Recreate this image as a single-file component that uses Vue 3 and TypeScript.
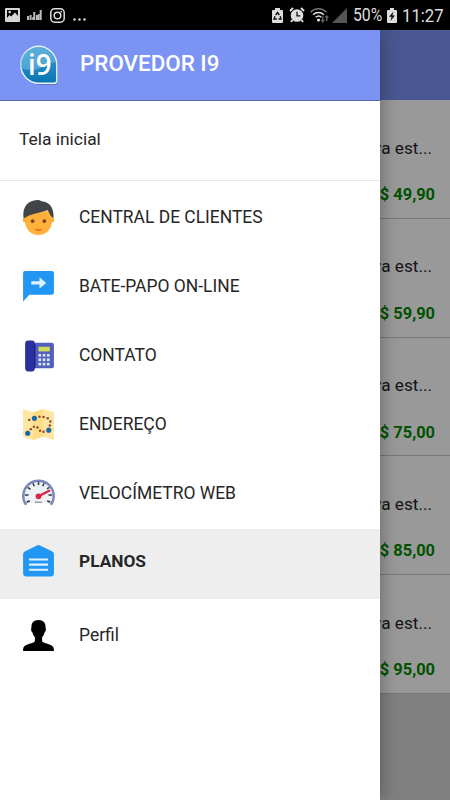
<script setup lang="ts">
interface MenuItem {
  id: string
  label: string
  active?: boolean
}

const menu: MenuItem[] = [
  { id: 'client', label: 'CENTRAL DE CLIENTES' },
  { id: 'chat', label: 'BATE-PAPO ON-LINE' },
  { id: 'phone', label: 'CONTATO' },
  { id: 'map', label: 'ENDEREÇO' },
  { id: 'speed', label: 'VELOCÍMETRO WEB' },
  { id: 'plans', label: 'PLANOS', active: true },
  { id: 'profile', label: 'Perfil' },
]

const prices: string[] = ['49,90', '59,90', '75,00', '85,00', '95,00']
const keys: number[] = [0, 1, 2, 3, 4, 5, 6, 7, 8]
</script>

<template>
  <div class="screen">
    <header class="status">
      <div class="status-left">
        <svg class="s-img" width="15" height="14" viewBox="0 0 15 14"><rect width="15" height="14" rx="1" fill="#d6d6d6" /><path fill="#000" d="M2 10V2h11v6l-3-3.500-3.800 4L4.500 7Z" /><circle cx="4.700" cy="4" r="1.300" fill="#d6d6d6" /></svg>
        <svg class="s-bars" width="15" height="10" viewBox="0 0 15 10"><path fill="#bdbdbd" d="M0 6h2v4H0zM2.600 5h2v5h-2zM5.200 7h2v3h-2zM6.300 2h2v8h-2zM9 5h2v5H9zM11 4h1.500v6H11zM12.700 0h2v10h-2z" /></svg>
        <svg class="s-insta" width="15" height="15" viewBox="0 0 15 15" fill="none" stroke="#dedede"><rect x=".8" y=".8" width="13.400" height="13.400" rx="3.800" stroke-width="1.500" /><circle cx="7.500" cy="7.500" r="3.300" stroke-width="1.500" /><circle cx="11.300" cy="3.700" r=".6" fill="#dedede" stroke-width=".5" /></svg>
        <svg class="s-dots" width="14" height="3" viewBox="0 0 14 3" fill="#ddd"><circle cx="1.500" cy="1.500" r="1.200" /><circle cx="6.500" cy="1.500" r="1.200" /><circle cx="11.500" cy="1.500" r="1.200" /></svg>
      </div>
      <div class="status-right">
        <svg width="11" height="15" viewBox="0 0 11 15"><path fill="#dedede" d="M3 0h5v2h2a1 1 0 0 1 1 1v11a1 1 0 0 1-1 1H1a1 1 0 0 1-1-1V3a1 1 0 0 1 1-1h2Z" /><path fill="none" stroke="#111" stroke-width="1.400" d="m3.700 7 1.800-2.500L7.300 7M8.200 8.200l.8 2.800H6.500M4.800 11H2l1-2.700" /></svg>
        <svg class="s-alarm" width="16" height="16" viewBox="0 0 16 16"><circle cx="8" cy="8.500" r="6.300" fill="#dedede" /><path fill="none" stroke="#dedede" stroke-width="2" d="m1 4 3-3M15 4l-3-3M3.500 13 2 15M12.500 13l1.500 2" /><path fill="none" stroke="#111" stroke-width="1.300" d="M8 4.700v4.200h3.300" /></svg>
        <svg class="s-wifi" width="20" height="15" viewBox="0 0 20 15"><g fill="none" stroke-width="1.500"><path stroke="#777" d="M.7 4.200c4.200-4.500 11.400-4.500 15.600 0" /><path stroke="#dedede" d="M3.100 6.800c3-3 7.800-3 10.800 0M5.600 9.300c1.700-1.600 4.100-1.600 5.800 0" /></g><circle cx="8.500" cy="12" r="1.600" fill="#dedede" /><path fill="#666" d="M12 8.500h1.500V12h1.500l-2.300 3-2.200-3H12ZM16 13v-3.500h-1.400l2.200-2.500L19 9.500h-1.500V13Z" /></svg>
        <svg class="s-signal" width="15" height="15" viewBox="0 0 15 15"><path fill="#555" d="M15 0v15H0Z" /></svg>
        <span class="percent">50%</span>
        <svg class="s-battery" width="10" height="15" viewBox="0 0 10 15"><path fill="#dedede" d="M3 0h4v2h2a1 1 0 0 1 1 1v11a1 1 0 0 1-1 1H1a1 1 0 0 1-1-1V3a1 1 0 0 1 1-1h2Z" /><path fill="#111" d="M6.500 3.500 2 8.700h2.500L3.500 13 8 7.500H5.500Z" /></svg>
        <span class="clock">11:27</span>
      </div>
    </header>

    <main class="app">
      <section class="page">
        <div class="toolbar"></div>
        <article v-for="price in prices" :key="price" class="plan">
          <p class="plan-name">va est...</p>
          <p class="plan-price">$ {{ price }}</p>
        </article>
      </section>
      <div class="scrim"></div>

      <aside class="drawer">
        <div class="brand">
          <div class="logo">
            <svg width="42" height="42" viewBox="0 0 42 42">
              <defs>
                <linearGradient id="logoFill" x1="0" y1="0" x2="0" y2="1"><stop offset="0" stop-color="#3e9bd0" /><stop offset=".55" stop-color="#2187c2" /><stop offset="1" stop-color="#0874b2" /></linearGradient>
              </defs>
              <path fill="#4b65a8" opacity=".6" d="M21 2.500A19 19 0 0 1 40 21.500V37q0 3-3 3H21A19 19 0 0 1 21 2.500Z" />
              <path fill="url(#logoFill)" stroke="#e4f2fa" stroke-width="1.400" d="M20 1.200A18.800 18.800 0 0 1 38.800 20v15.500q0 2.800-2.800 2.800H20A18.600 18.600 0 0 1 20 1.200Z" />
              <path fill="#72bae0" opacity=".6" d="M2.200 20A17.800 17.800 0 0 1 37.500 17C27 18 24 25 13 25q-6 0-10.500-2Z" />
            </svg>
            <span class="logo-text">i9</span>
          </div>
          <h1>PROVEDOR I9</h1>
        </div>
        <a class="home">Tela inicial</a>
        <nav class="menu">
          <a v-for="item in menu" :key="item.id" class="item" :class="[item.id, { active: item.active }]">
            <svg v-if="item.id === 'client'" class="icon" viewBox="0 0 36 36">
              <circle cx="5" cy="20.500" r="2.300" fill="#ffa726" /><circle cx="31" cy="20.500" r="2.300" fill="#ffa726" />
              <path fill="#ffb13b" d="M5 12h26v9c0 9-5.500 14-13 14S5 30 5 21Z" />
              <path fill="#414548" d="M3.500 19C2 8 7 1 18.500 1l2.500 1.300C29 3 33.500 9 32.500 19L30 16.500 27 11 10 15.500l-4 2Z" />
              <circle cx="12.300" cy="21.500" r="1.900" fill="#784719" /><circle cx="23.700" cy="21.500" r="1.900" fill="#784719" />
              <path fill="#ed6c20" d="M14 29.200h8q-1.500 2-4 2t-4-2Z" />
            </svg>
            <svg v-else-if="item.id === 'chat'" class="icon" viewBox="0 0 36 36">
              <path fill="#2196f3" d="M5 3h26a2 2 0 0 1 2 2v19a2 2 0 0 1-2 2H9l-6 6.500V5a2 2 0 0 1 2-2Z" />
              <path fill="#dff2ff" d="M11 13h8V9l6.500 5.500L19 20v-4h-8Z" />
            </svg>
            <svg v-else-if="item.id === 'phone'" class="icon" viewBox="0 0 36 36">
              <rect x="10" y="5.500" width="23" height="25" rx="2" fill="#5260bd" />
              <rect x="5" y="3.500" width="9.500" height="30" rx="3" fill="#27309b" />
              <path fill="none" stroke="#182185" stroke-width="1.200" d="M14.500 7v23" />
              <rect x="18" y="9.500" width="11" height="4.500" fill="#cddc59" />
              <rect v-for="key in keys" :key="key" :x="18 + key % 3 * 4.100" :y="16.500 + Math.floor(key / 3) * 4.300" width="2.600" height="2.600" fill="#dce1ff" />
            </svg>
            <svg v-else-if="item.id === 'map'" class="icon" viewBox="0 0 36 36">
              <path fill="#ffe5a2" d="m3 3 9.500 3 10-3L33 6v27l-10.500-3-10 3L3 30Z" />
              <path fill="#ffdc87" d="m12.500 6 10-3v27l-10 3Z" />
              <g fill="#8b4b36"><circle cx="9" cy="13.500" r="1.200" /><circle cx="19" cy="10.500" r="1.200" /><circle cx="23" cy="10.700" r="1.200" /><circle cx="27" cy="12" r="1.200" /><circle cx="29.500" cy="15" r="1.200" /><circle cx="29" cy="19" r="1.200" /><circle cx="10.500" cy="22.500" r="1.200" /><circle cx="13.500" cy="20.300" r="1.200" /><circle cx="17" cy="21" r="1.200" /><circle cx="19.500" cy="24" r="1.200" /><circle cx="23" cy="25" r="1.200" /></g>
              <g fill="#1768a0"><circle cx="14" cy="12" r="2.500" /><circle cx="28" cy="23.500" r="2.500" /><circle cx="7.500" cy="26.500" r="2.500" /></g>
            </svg>
            <svg v-else-if="item.id === 'speed'" class="icon" viewBox="0 0 36 36">
              <path fill="#eef2f4" d="M6.700 30a14.800 14.800 0 1 1 22.600 0l-3.300-2H10Z" />
              <path fill="none" stroke="#7986bb" stroke-width="2.400" d="M6 30a14.800 14.800 0 1 1 24 0" />
              <path fill="none" stroke="#303a4b" stroke-width="1.500" d="m6.500 27.500 3-1.500M4.800 20.500h3.500M7.500 13l2.700 2M12.500 9l1.500 2.700M18 7.500v3.200M23.500 9 22 11.700M28.500 13l-2.200 1.500M31.200 20.500h-3.500M29.500 27.500l-3-1.500" />
              <path stroke="#df2248" stroke-width="2.200" stroke-linecap="round" d="m18 21.700 10.500-5.500" /><circle cx="18" cy="21.700" r="2.800" fill="#df2248" />
              <path stroke="#808991" stroke-width="1.500" stroke-dasharray="1.300 .4" d="M14.500 27.500h7" />
            </svg>
            <svg v-else-if="item.id === 'plans'" class="icon" viewBox="0 0 36 36">
              <path fill="#2196f3" d="M3 12q0-2 2-3L16.500 3.500q1.500-1 3 0L31 9q2 1 2 3v18.500q0 3-3 3H6q-3 0-3-3Z" />
              <path stroke="#dff2ff" stroke-width="2" d="M8.700 17h18.600M8.700 22h18.600M8.700 27h18.600" />
            </svg>
            <svg v-else class="icon" viewBox="0 0 36 36">
              <path fill="#000" d="M18 3c4.700 0 7.300 3 6.800 7.500.9.500.2 4.500-1 4.600-.4 2-1.200 3.500-2.300 4.600v4c2 3 11.500 2 11.500 8V33H3v-1.300c0-6 9.500-5 11.500-8v-4c-1.100-1.100-1.900-2.600-2.300-4.600-1.200-.1-1.900-4.100-1-4.600C10.700 6 13.300 3 18 3Z" />
            </svg>
            <span>{{ item.label }}</span>
          </a>
        </nav>
      </aside>
    </main>
  </div>
</template>

<style>
body { margin: 0; }
</style>

<style scoped>
.screen { width: 450px; height: 800px; overflow: hidden; display: flex; flex-direction: column; background: #000; font-family: Roboto, sans-serif; color: #262626; }
.status { height: 30px; flex: none; box-sizing: border-box; display: flex; align-items: center; justify-content: space-between; padding: 0 7px 0 5px; background: #000; color: #dedede; }
.status-left, .status-right { display: flex; align-items: center; }
.s-bars { margin-left: 7px; }
.s-insta { margin-left: 8px; }
.s-dots { margin-left: 8px; margin-top: 9px; }
.s-alarm { margin-left: 6px; }
.s-wifi { margin-left: 5px; }
.s-signal { margin-left: 2px; }
.percent { margin-left: 6px; width: 31px; font-size: 19px; line-height: 30px; display: inline-block; transform: scaleX(.83); transform-origin: left; }
.s-battery { margin-left: 3px; }
.clock { margin-left: 5px; width: 41px; font-size: 19px; transform: scaleX(.88); transform-origin: left; }
.app { position: relative; height: 770px; flex: none; overflow: hidden; }
.page { height: 100%; background: #d5d5d5; }
.toolbar { height: 70px; background: #7b93f3; }
.plan { height: 118.750px; box-sizing: border-box; padding: 35.500px 15px 0 0; background: #fff; border-bottom: 1px solid #c8c8c8; text-align: right; }
.plan p { margin: 0; white-space: nowrap; }
.plan-name { padding-right: 3px; font-size: 17.200px; line-height: 24px; }
.plan .plan-price { margin-top: 24.500px; color: #008a00; font-size: 16.400px; line-height: 22px; font-weight: 700; }
.scrim { position: absolute; inset: 0; background: rgba(0, 0, 0, .4); }
.drawer { position: absolute; left: 0; top: 0; width: 380px; height: 100%; background: #fff; box-shadow: 0 0 18px rgba(0, 0, 0, .35); }
.brand { height: 71px; box-sizing: border-box; display: flex; align-items: center; padding-left: 19px; border-bottom: 1px solid #566aac; background: #7b93f3; }
.logo { position: relative; width: 42px; height: 42px; margin: 1px 1px 0 -1px; }
.logo svg { display: block; }
.logo-text { position: absolute; left: 10px; top: 1px; color: #fff; font: 600 29px/36px "Open Sans", sans-serif; transform: scaleX(.95); transform-origin: left; }
h1 { margin: -4px 0 0 19px; color: #fff; font-size: 22.400px; line-height: 30px; font-weight: 500; }
.home { display: flex; align-items: center; height: 80px; box-sizing: border-box; padding: 0 19px 3px; border-bottom: 1px solid #e8e8e8; font-size: 17.400px; }
.menu { padding-top: 3px; }
.item { display: flex; align-items: center; height: 68.900px; box-sizing: border-box; padding: 0 20px 2px; gap: 22px; font-size: 17.450px; }
.icon { display: block; width: 37px; height: 37px; flex: none; margin-top: 0; }
.item.speed { height: 69.400px; padding-bottom: 3px; }
.item.active { height: 70px; padding-bottom: 6px; background: #eee; font-size: 17.300px; font-weight: 700; }
.item.profile { padding-top: 3px; height: 74px; padding-bottom: 4px; }
</style>
